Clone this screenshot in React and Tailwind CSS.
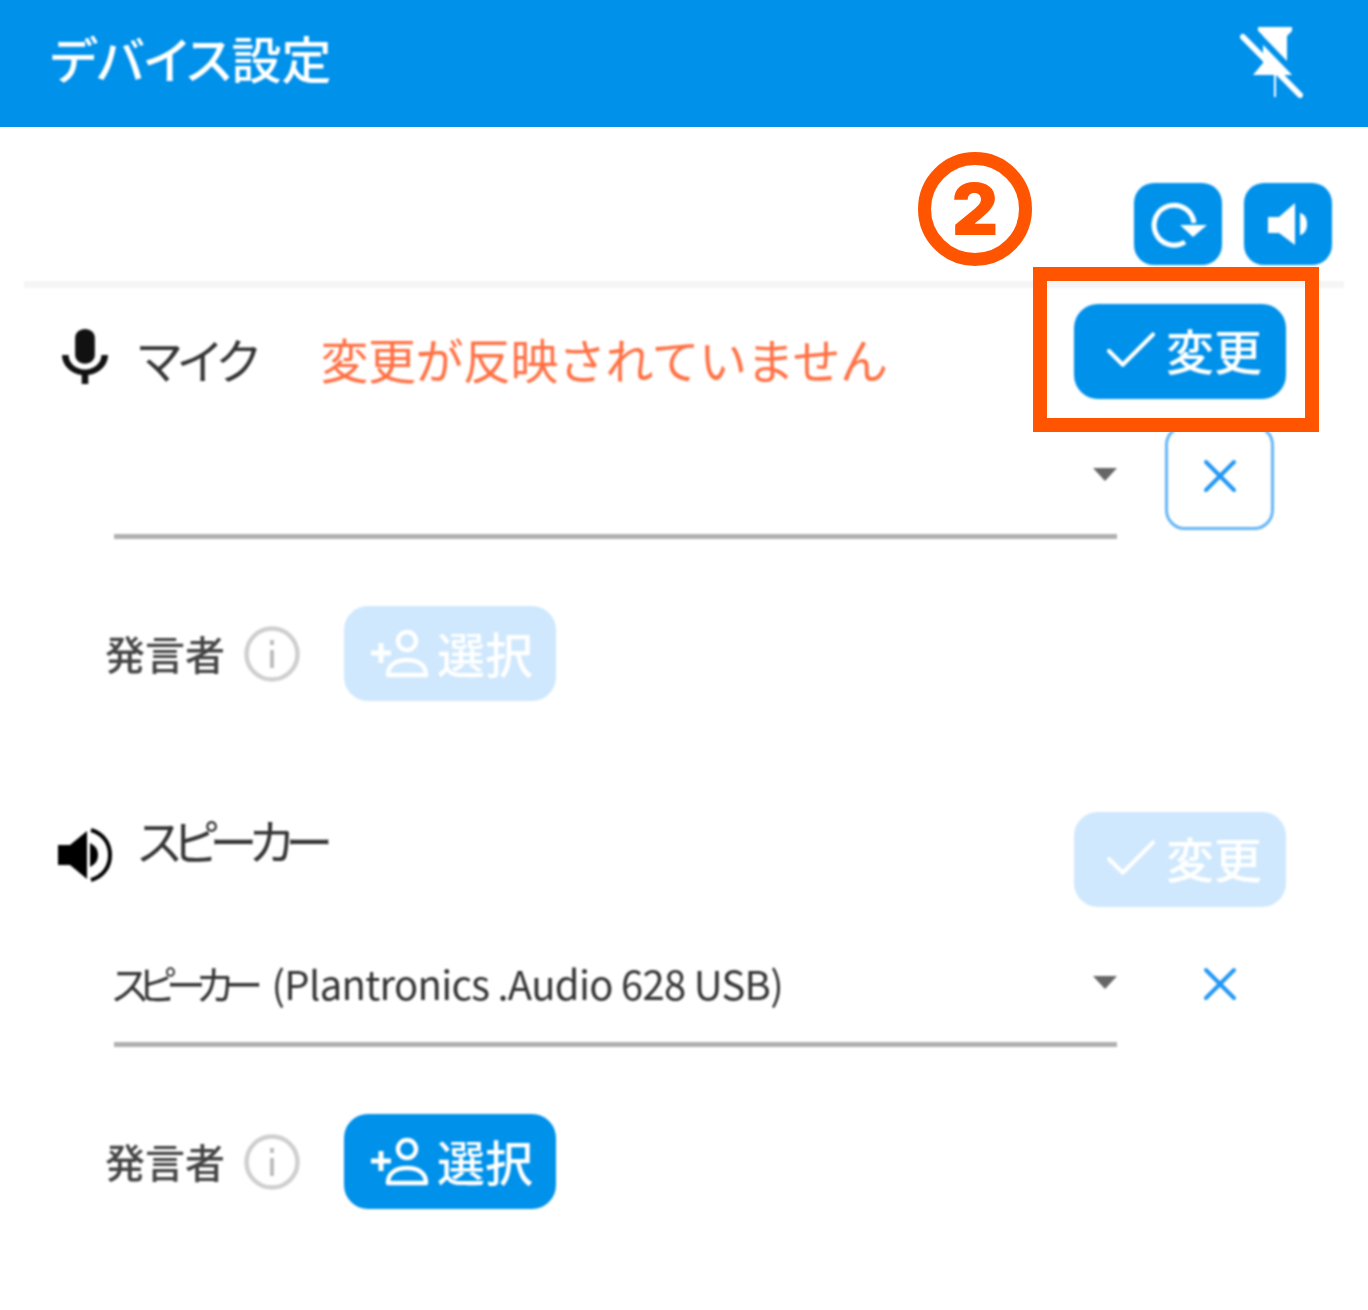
import React from 'react';
import { X, Check } from 'lucide-react';

const palt = "[font-feature-settings:'palt']";

function PinOffIcon() {
  return (
    <svg width="64" height="76" viewBox="0 0 64 76">
      <path d="M18 4H52V8L47 13V40L56 52H36V74H34V52H13L23 40V13L18 8Z" fill="#fff" />
      <path d="M6 10L60 66" stroke="#0091ea" strokeWidth="6" transform="translate(5 -5)" />
      <path d="M3 14L60 72" stroke="#fff" strokeWidth="6" strokeLinecap="round" />
    </svg>
  );
}

function RefreshIcon() {
  return (
    <svg width="88" height="82" viewBox="0 0 88 82">
      <path d="M51 59A20 20 0 1 1 60 40" fill="none" stroke="#fff" strokeWidth="5" />
      <path d="M46 42H73L59 54Z" fill="#fff" />
    </svg>
  );
}

function VolumeSmallIcon() {
  return (
    <svg width="88" height="82" viewBox="0 0 88 82">
      <path d="M24 34H35L51 20V62L35 50H24Z" fill="#fff" />
      <path d="M56 30C61 31 63 36 63 41C63 46 61 51 56 52Z" fill="#fff" />
    </svg>
  );
}

function MicIcon() {
  return (
    <svg width="46" height="55" viewBox="5 2 14 19" preserveAspectRatio="none" className="shrink-0 mt-[10px]">
      <path d="M12 14c1.66 0 3-1.34 3-3V5c0-1.66-1.34-3-3-3S9 3.34 9 5v6c0 1.66 1.34 3 3 3z" fill="#111" />
      <path d="M17 11c0 2.76-2.24 5-5 5s-5-2.24-5-5H5c0 3.53 2.61 6.43 6 6.92V21h2v-3.08c3.39-.49 6-3.39 6-6.92h-2z" fill="#111" />
    </svg>
  );
}

function SpeakerIcon() {
  return (
    <svg width="54" height="54" viewBox="0 0 54 54" className="shrink-0 -mt-[10px]">
      <path d="M0 17H12L29 3V51L12 37H0Z" fill="#000" />
      <path d="M32 15C38 18 40 22 40 27C40 32 38 36 32 39Z" fill="#000" />
      <path d="M33 2C46 6 52 16 52 27C52 38 46 48 33 52" fill="none" stroke="#000" strokeWidth="4" />
    </svg>
  );
}

function AddPersonIcon() {
  return (
    <svg width="64" height="50" viewBox="0 0 64 50" className="shrink-0">
      <path d="M4 24H24M14 14V34" stroke="#fff" strokeWidth="5" />
      <circle cx="40" cy="12" r="9" fill="none" stroke="#fff" strokeWidth="4.5" />
      <path d="M21 46C21 36 29 31 40 31C51 31 59 36 59 46Z" fill="none" stroke="#fff" strokeWidth="4.5" strokeLinejoin="round" />
    </svg>
  );
}

function InfoIcon() {
  return (
    <svg width="56" height="56" viewBox="0 0 56 56" className="shrink-0">
      <circle cx="28" cy="28" r="25.5" fill="none" stroke="#cfcfcf" strokeWidth="4.5" />
      <rect x="26" y="24" width="4" height="18" fill="#bdbdbd" />
      <rect x="26" y="14" width="4" height="5" fill="#bdbdbd" />
    </svg>
  );
}

function ChangeButton({ disabled }) {
  return (
    <button className={`w-[212px] h-[95px] shrink-0 rounded-[24px] flex items-center justify-center gap-[2px] text-white text-[48px] font-medium leading-none ${disabled ? 'bg-[#cfe8fd]' : 'bg-[#0091ea]'}`}>
      <Check size={66} strokeWidth={1.5} className="mt-[-2px]" />
      <span className="-mt-[6px]">変更</span>
    </button>
  );
}

function PickButton({ disabled }) {
  return (
    <button className={`w-[212px] h-[95px] rounded-[24px] flex items-center justify-center gap-[6px] text-white text-[48px] font-medium leading-none ${disabled ? 'bg-[#cfe8fd]' : 'bg-[#0091ea]'}`}>
      <AddPersonIcon />
      <span className="-mt-[4px]">選択</span>
    </button>
  );
}

function DeviceRow({ name, detail, outlined }) {
  return (
    <div className="flex items-start pl-[114px] pr-[94px] mt-[26px]">
      <div className="flex-1 h-[114px] border-b-[5px] border-[#b0b0b0] flex items-center justify-between pb-[10px]">
        <span className={`text-[40px] leading-none text-[#333] -ml-[2px] ${palt}`}>
          <span className="tracking-[-9.5px]">{name}</span>
          {detail && <span className="ml-[18px] tracking-[-0.7px]">{detail}</span>}
        </span>
        <span className="w-0 h-0 border-x-[12px] border-x-transparent border-t-[13px] border-t-[#666]" />
      </div>
      <div className={`w-[109px] h-[105px] ml-[48px] rounded-[20px] flex items-center justify-center ${outlined ? 'border-[3px] border-[#64b5f6]' : ''}`}>
        <X size={56} strokeWidth={1.7} className="text-[#2196f3] -mt-[4px]" />
      </div>
    </div>
  );
}

function SpeakerAssign({ disabled }) {
  return (
    <div className="flex items-center pl-[105px] mt-[67px]">
      <span className="text-[40px] font-medium leading-none text-[#444] w-[120px] -mt-[2px]">発言者</span>
      <span className="ml-[19px]"><InfoIcon /></span>
      <span className="ml-[44px]"><PickButton disabled={disabled} /></span>
    </div>
  );
}

export default function App() {
  return (
    <div className="relative w-[1368px] h-[1310px] bg-white overflow-hidden font-['Noto_Sans_CJK_JP','Noto_Sans',sans-serif]">
      <div className="h-[127px] bg-[#0091ea]">
        <div className="blur-[1px] h-full flex items-center justify-between pl-[50px] pr-[64px]">
          <h1 className={`text-[50px] leading-none font-medium text-white -mt-[14px] ${palt}`}>デバイス設定</h1>
          <span className="-mt-[6px]"><PinOffIcon /></span>
        </div>
      </div>

      <div className="blur-[1px]">
        <div className="h-[154px] flex justify-end items-start gap-[22px] pt-[56px] pr-[36px]">
          <button className="w-[88px] h-[82px] rounded-[20px] bg-[#0091ea]"><RefreshIcon /></button>
          <button className="w-[88px] h-[82px] rounded-[20px] bg-[#0091ea]"><VolumeSmallIcon /></button>
        </div>
        <div className="mx-[24px] h-[7px] bg-[#f5f5f5]" />

        {/* mic */}
        <div className="flex items-center pl-[62px] pr-[82px] mt-[16px] h-[95px]">
          <MicIcon />
          <span className={`ml-[30px] text-[48px] leading-none text-[#333] tracking-[-3px] mt-[12px] ${palt}`}>マイク</span>
          <span className="ml-[64px] text-[48px] leading-none text-[#ff7043] tracking-[-0.5px] mt-[12px]">変更が反映されていません</span>
          <span className="ml-auto"><ChangeButton /></span>
        </div>
        <DeviceRow name="" outlined />
        <SpeakerAssign disabled />

        {/* speaker */}
        <div className="flex items-center pl-[58px] pr-[82px] mt-[111px] h-[95px]">
          <SpeakerIcon />
          <span className={`ml-[26px] -mt-[42px] text-[48px] leading-none text-[#333] tracking-[-8px] ${palt}`}>スピーカー</span>
          <span className="ml-auto"><ChangeButton disabled /></span>
        </div>
        <DeviceRow name="スピーカー" detail="(Plantronics .Audio 628 USB)" />
        <SpeakerAssign />
      </div>

      {/* annotation */}
      <div className="absolute left-[918px] top-[152px] w-[114px] h-[114px] rounded-full border-[13px] border-[#ff5500] flex items-center justify-center text-[#ff5500] text-[72px] font-black leading-none font-['Inter',sans-serif]">2</div>
      <div className="absolute left-[1033px] top-[267px] w-[286px] h-[165px] border-[14px] border-[#ff5500]" />
    </div>
  );
}
